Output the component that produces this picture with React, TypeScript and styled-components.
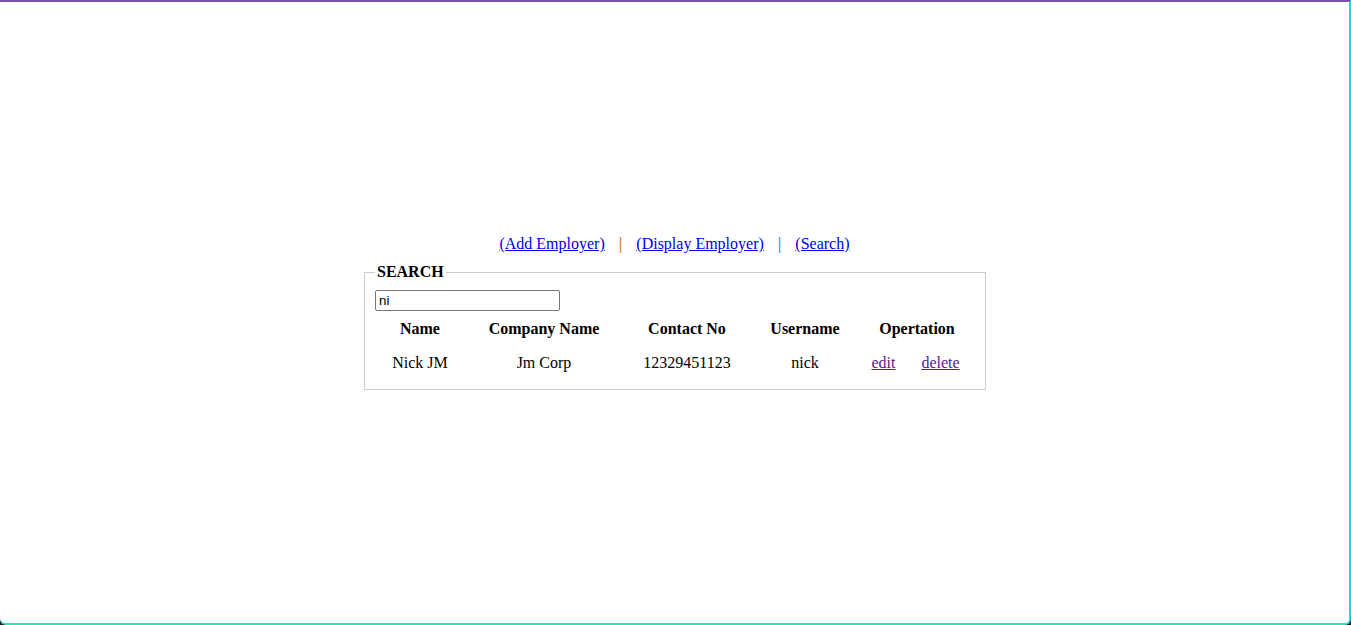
import React from 'react';
import styled, { createGlobalStyle } from 'styled-components';

const GlobalStyle = createGlobalStyle`
  html {
    background: #21172e;
  }
  body {
    margin: 0;
    font-family: "Liberation Serif", "Times New Roman", serif;
    font-size: 16px;
    color: #000;
  }
`;

const Frame = styled.div`
  box-sizing: border-box;
  min-height: 100vh;
  background: #fff;
  border-top: 2px solid #7b4fae;
  border-right: 2px solid #1fd6d6;
  border-bottom: 2px solid #27e8b4;
  border-radius: 0 0 6px 6px;
  display: flex;
  flex-direction: column;
  align-items: center;
  justify-content: center;
  gap: 10px;
`;

const Nav = styled.nav`
  display: flex;
  align-items: center;
  line-height: 18px;
`;

const NavLink = styled.a`
  color: #0000ee;
  text-decoration: underline;
`;

const Sep = styled.span<{ $color: string }>`
  color: ${(p) => p.$color};
  font-weight: bold;
  margin: 0 14px;
`;

const Box = styled.fieldset`
  box-sizing: border-box;
  width: 622px;
  margin: 0 0 0 1px;
  border: 1px solid #cccccc;
  padding: 9px 10px 7px 10px;
`;

const Legend = styled.legend`
  font-weight: bold;
  padding: 0 2px;
`;

const SearchInput = styled.input`
  box-sizing: border-box;
  display: block;
  width: 185px;
  height: 21px;
  padding: 1px 3px;
  border: 1px solid #767676;
  border-radius: 2px;
  font-family: "Liberation Sans", Arial, sans-serif;
  font-size: 13.33px;
  color: #000;
  outline: none;
`;

const Table = styled.table`
  width: 600px;
  border-spacing: 2px;
  margin: 1px 0 0 0;
  table-layout: fixed;
`;

const Th = styled.th`
  padding: 6px 0;
  font-weight: bold;
  text-align: center;
`;

const Td = styled.td`
  padding: 8px 0;
  text-align: center;
`;

const RowLink = styled.a`
  color: #551a8b;
  text-decoration: underline;
`;

interface Employer {
  name: string;
  company: string;
  contact: string;
  username: string;
}

const employers: Employer[] = [
  { name: 'Nick JM', company: 'Jm Corp', contact: '12329451123', username: 'nick' },
];

const App: React.FC = () => {
  return (
    <>
      <GlobalStyle />
      <Frame>
        <Nav>
          <NavLink href="#add">(Add Employer)</NavLink>
          <Sep $color="#e8741c">|</Sep>
          <NavLink href="#display">(Display Employer)</NavLink>
          <Sep $color="#3d8fe6">|</Sep>
          <NavLink href="#search">(Search)</NavLink>
        </Nav>
        <Box>
          <Legend>SEARCH</Legend>
          <SearchInput type="text" defaultValue="ni" />
          <Table>
            <colgroup>
              <col style={{ width: 86 }} />
              <col style={{ width: 158 }} />
              <col style={{ width: 124 }} />
              <col style={{ width: 108 }} />
              <col style={{ width: 45 }} />
              <col style={{ width: 65 }} />
            </colgroup>
            <thead>
              <tr>
                <Th>Name</Th>
                <Th>Company Name</Th>
                <Th>Contact No</Th>
                <Th>Username</Th>
                <Th colSpan={2}>Opertation</Th>
              </tr>
            </thead>
            <tbody>
              {employers.map((e) => (
                <tr key={e.username}>
                  <Td>{e.name}</Td>
                  <Td>{e.company}</Td>
                  <Td>{e.contact}</Td>
                  <Td>{e.username}</Td>
                  <Td><RowLink href="#edit">edit</RowLink></Td>
                  <Td><RowLink href="#delete">delete</RowLink></Td>
                </tr>
              ))}
            </tbody>
          </Table>
        </Box>
      </Frame>
    </>
  );
};

export default App;
